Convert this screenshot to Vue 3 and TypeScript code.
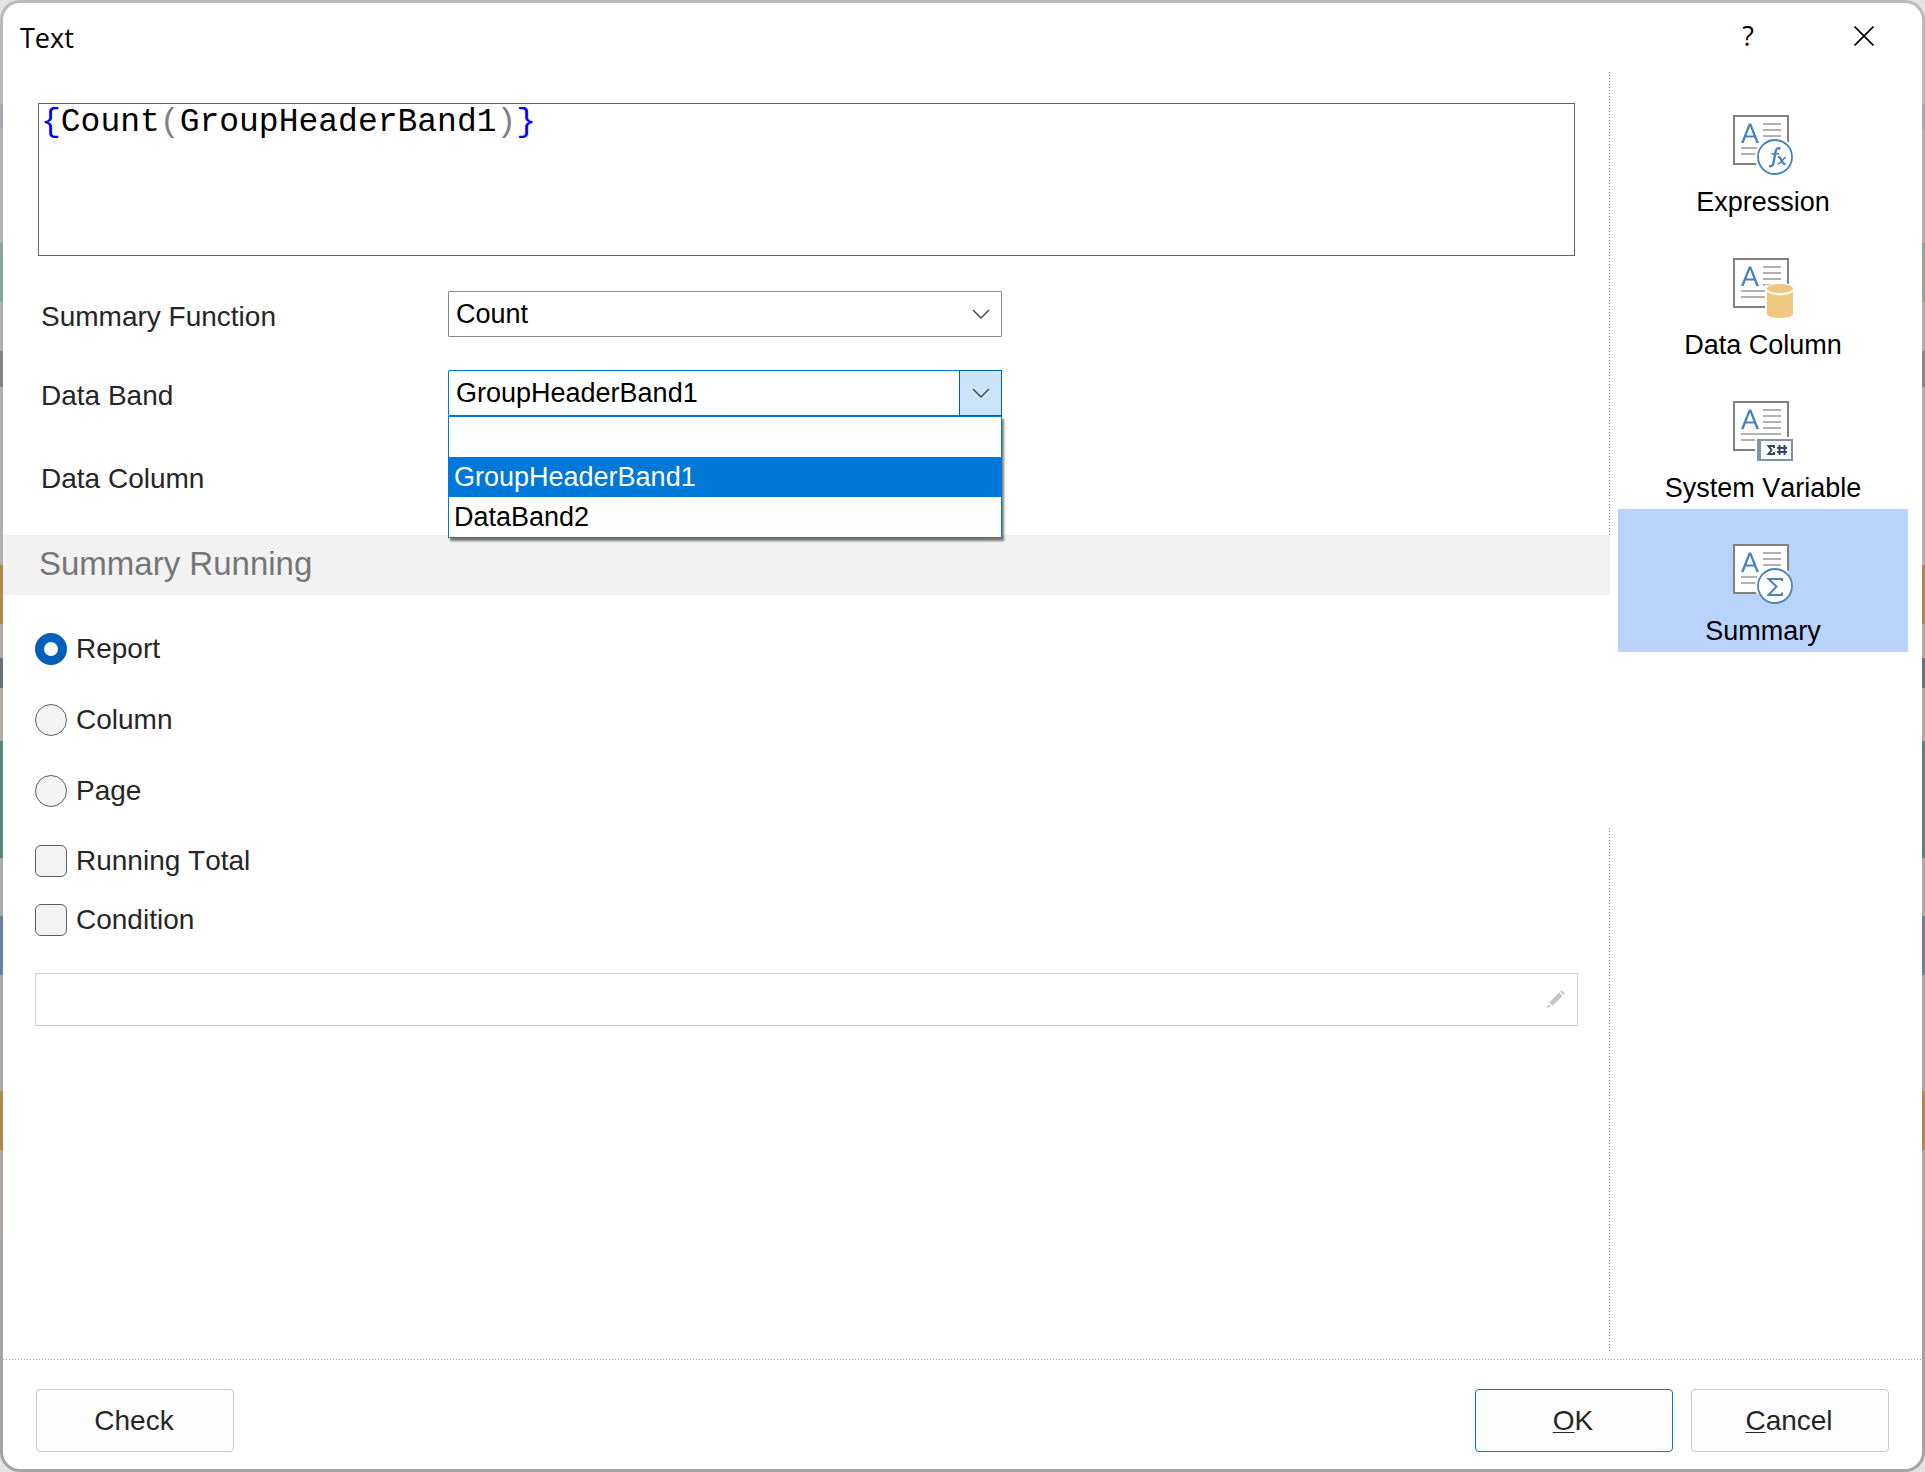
<script setup lang="ts">
import { computed, ref } from 'vue'

type PageId = 'expression' | 'column' | 'variable' | 'summary'

interface Page {
  id: PageId
  label: string
}

const pages: Page[] = [
  { id: 'expression', label: 'Expression' },
  { id: 'column', label: 'Data Column' },
  { id: 'variable', label: 'System Variable' },
  { id: 'summary', label: 'Summary' },
]
const bands: string[] = ['', 'GroupHeaderBand1', 'DataBand2']
const scopes: string[] = ['Report', 'Column', 'Page']

const activePage = ref<PageId>('summary')
const expression = ref('{Count(GroupHeaderBand1)}')
const summaryFunction = ref('Count')
const dataBand = ref('GroupHeaderBand1')
const dataColumn = ref('')
const listOpen = ref(true)
const scope = ref('Report')
const runningTotal = ref(false)
const useCondition = ref(false)
const condition = ref('')

// Splits the expression into braces, parentheses and plain runs for colouring.
const tokens = computed(() =>
  (expression.value.match(/[{}]|[()]|[^{}()]+/g) ?? []).map((text) => ({
    text,
    kind: /[{}]/.test(text) ? 'brace' : /[()]/.test(text) ? 'paren' : 'plain',
  })),
)

function pick(band: string) {
  dataBand.value = band
  listOpen.value = false
}
</script>

<template>
  <div class="backdrop">
    <div class="dialog" role="dialog" aria-labelledby="dialog-title">
      <header class="titlebar">
        <h1 id="dialog-title" class="title">Text</h1>
        <button class="caption-button" type="button" aria-label="Help">?</button>
        <button class="caption-button" type="button" aria-label="Close">
          <svg width="20" height="20" viewBox="0 0 20 20" fill="none" stroke="#000" stroke-width="1.7">
            <path d="M0.5 0.5 19.5 19.5M19.5 0.5 0.5 19.5" />
          </svg>
        </button>
      </header>

      <div class="body">
        <main class="main">
          <div class="editor">
            <pre class="highlight" aria-hidden="true"><span v-for="(t, i) in tokens" :key="i" :class="t.kind">{{ t.text }}</span></pre>
            <textarea v-model="expression" class="code" aria-label="Expression" spellcheck="false"></textarea>
          </div>

          <section class="fields">
            <div class="field">
              <label class="field-label" for="summary-function">Summary Function</label>
              <div class="combo">
                <select id="summary-function" v-model="summaryFunction" class="select">
                  <option>Count</option>
                </select>
                <span class="arrow">
                  <svg width="18" height="10" viewBox="0 0 18 10" fill="none" stroke="#444" stroke-width="1.4"><path d="M1 1 9 9 17 1" /></svg>
                </span>
              </div>
            </div>

            <div class="field">
              <label class="field-label" for="data-band">Data Band</label>
              <div class="combo" :class="{ open: listOpen }">
                <select id="data-band" v-model="dataBand" class="select" @mousedown.prevent="listOpen = !listOpen">
                  <option v-for="band in bands" :key="band">{{ band }}</option>
                </select>
                <span class="arrow">
                  <svg width="18" height="10" viewBox="0 0 18 10" fill="none" stroke="#444" stroke-width="1.4"><path d="M1 1 9 9 17 1" /></svg>
                </span>
                <ul v-if="listOpen" class="list" role="listbox" aria-label="Data Band">
                  <li
                    v-for="band in bands"
                    :key="band"
                    class="item"
                    :class="{ chosen: band === dataBand }"
                    role="option"
                    :aria-selected="band === dataBand"
                    @click="pick(band)"
                  >{{ band }}</li>
                </ul>
              </div>
            </div>

            <div class="field tall">
              <label class="field-label" for="data-column">Data Column</label>
              <div class="combo">
                <select id="data-column" v-model="dataColumn" class="select">
                  <option></option>
                </select>
              </div>
            </div>
          </section>

          <h2 class="band">Summary Running</h2>

          <section class="options">
            <div class="radios" role="radiogroup" aria-label="Summary Running">
              <label v-for="s in scopes" :key="s" class="option">
                <input v-model="scope" class="mark radio" type="radio" name="scope" :value="s" />
                <span>{{ s }}</span>
              </label>
            </div>
            <div class="checks">
              <label class="option">
                <input v-model="runningTotal" class="mark check" type="checkbox" />
                <span>Running Total</span>
              </label>
              <label class="option">
                <input v-model="useCondition" class="mark check" type="checkbox" />
                <span>Condition</span>
              </label>
            </div>
            <div class="condition">
              <input v-model="condition" class="condition-input" type="text" aria-label="Condition expression" :disabled="!useCondition" />
              <button class="edit" type="button" aria-label="Edit condition" :disabled="!useCondition">
                <svg width="20" height="20" viewBox="0 0 20 20" fill="#c4c4c4">
                  <path d="M1 19 2.2 15 5 17.8ZM3.2 13.4 13.2 3.6 16.6 7 6.6 16.8ZM14.2 2.6 15.6 1.2 19 4.4 17.6 6Z" />
                </svg>
              </button>
            </div>
          </section>
        </main>

        <div class="divider" aria-hidden="true">
          <span class="dots upper"></span>
          <span class="dots lower"></span>
        </div>

        <nav class="pages" aria-label="Editor pages">
          <button
            v-for="page in pages"
            :key="page.id"
            class="page"
            :class="{ active: page.id === activePage }"
            type="button"
            @click="activePage = page.id"
          >
            <svg class="page-icon" width="60" height="60" viewBox="0 0 60 60" aria-hidden="true">
              <clipPath :id="'sheet-' + page.id"><rect width="56" height="50" /></clipPath>
              <rect x="1" y="1" width="54" height="48" fill="#fff" stroke="#808080" stroke-width="2" />
              <path d="M30 9h18M30 15h18M30 21h18M30 27h18M8 33h40M8 39h40" stroke="#b2b2b2" stroke-width="2" />
              <path d="M8 28h2.600l2.200-5.600h8.400l2.200 5.600H26L18.200 8.500h-2.400ZM13.600 20.400 17 11.600 20.400 20.400Z" fill="#4a82bd" fill-rule="evenodd" />
              <template v-if="page.id === 'expression' || page.id === 'summary'">
                <circle cx="42" cy="42" r="20" fill="#fff" :clip-path="'url(#sheet-' + page.id + ')'" />
                <circle cx="42" cy="42" r="17" fill="#fff" stroke="#4a82bd" stroke-width="1.8" />
                <path
                  v-if="page.id === 'summary'"
                  d="M49 37V35H35.500L43.500 42.500 35.500 51H49V48.500"
                  fill="none"
                  stroke="#4a82bd"
                  stroke-width="2"
                />
                <g v-else fill="none" stroke="#4a82bd">
                  <path d="M47.500 33.800C45 32.400 43.200 33.400 42.600 36.500L40.400 48C39.800 50.800 38.200 51.800 36 50.800" stroke-width="2.400" />
                  <path d="M38.500 38.800H46" stroke-width="1.600" />
                  <path d="M45 42.500C48.500 40.500 48.500 50.500 52.500 48.500" stroke-width="2.400" />
                  <path d="M53 42.500C50 42 48.500 49.500 44.500 49" stroke-width="1.600" />
                </g>
              </template>
              <template v-else-if="page.id === 'column'">
                <rect x="32" y="27" width="24" height="23" fill="#fff" />
                <path d="M34 30v26c0 5.400 26 5.400 26 0V30Z" fill="#edc87e" />
                <ellipse cx="47" cy="31" rx="14" ry="6.400" fill="#fff" />
                <ellipse cx="47" cy="30.500" rx="13" ry="4.500" fill="#edc87e" />
              </template>
              <template v-else>
                <rect x="22" y="36" width="34" height="14" fill="#fff" />
                <rect x="25" y="39" width="34" height="20" fill="#fff" stroke="#8094b0" stroke-width="2" />
                <rect x="24" y="38" width="4" height="22" fill="#8094b0" />
                <path d="M41 47V45H35.500L38.500 49 35.500 53H41V51M46.500 44V54M51.500 44V54M44 47H54M44 51H54" fill="none" stroke="#34475e" stroke-width="2" />
              </template>
            </svg>
            <span>{{ page.label }}</span>
          </button>
        </nav>
      </div>

      <footer class="footer">
        <button class="button" type="button">Check</button>
        <div class="actions">
          <button class="button default" type="button"><u>O</u>K</button>
          <button class="button" type="button"><u>C</u>ancel</button>
        </div>
      </footer>
    </div>
  </div>
</template>

<style>
body {
  margin: 0;
  background: #e4e4e4;
}
</style>

<style scoped>
.backdrop,
.backdrop * {
  box-sizing: border-box;
}

/* The dimmed report page shows through as a thin rim around the dialog. */
.backdrop {
  display: flex;
  min-height: 100vh;
  padding: 3px;
  border-radius: 20px;
  font-family: "Liberation Sans", Arial, sans-serif;
  font-size: 28px;
  font-kerning: none;
  line-height: 32px;
  color: #262626;
  background: linear-gradient(
    #bababa 0 104px, #a4a8b0 104px 129px, #b2b2b2 129px 243px,
    #8aa898 243px 302px, #b0b0b0 302px 351px, #858585 351px 387px,
    #b0b0b0 387px 565px, #b08850 565px 624px, #b2aaa6 624px 658px,
    #68727a 658px 688px, #b4aaa4 688px 741px, #568880 741px 858px,
    #aaaaaa 858px 916px, #6a80a0 916px 975px, #a8a8a8 975px 1091px,
    #b08850 1091px 1150px, #b0a8a4 1150px 1240px, #a4a4a4 1240px
  );
}

.dialog {
  display: flex;
  flex: 1;
  flex-direction: column;
  min-width: 0;
  border-radius: 17px;
  background: #fff;
}

.titlebar {
  display: flex;
  height: 69px;
}

.title {
  flex: 1;
  margin: 0;
  padding-left: 17px;
  font: 400 27px/69px "Open Sans", "Noto Sans", sans-serif;
  color: #000;
}

.caption-button {
  display: flex;
  align-items: center;
  justify-content: center;
  width: 116px;
  height: 66px;
  padding: 0;
  border: 0;
  background: none;
  font: 400 27px/32px "Open Sans", "Noto Sans", sans-serif;
  color: #000;
}

.body {
  display: flex;
  flex: 1;
}

.main {
  flex: 1;
  min-width: 0;
  padding-top: 31px;
}

.editor {
  position: relative;
  height: 153px;
  margin: 0 34px 0 35px;
  border: 1px solid #646464;
}

.highlight,
.code {
  position: absolute;
  inset: 0;
  width: 100%;
  height: 100%;
  margin: 0;
  padding: 0 0 0 2px;
  border: 0;
  font: 400 33px/38px "Liberation Mono", "Courier New", monospace;
  white-space: pre-wrap;
}

.code {
  background: none;
  color: transparent;
  caret-color: #000;
  resize: none;
  outline: none;
}

.plain {
  color: #000;
}

.brace {
  color: #00f;
}

.paren {
  color: #808080;
}

.fields {
  display: flex;
  flex-direction: column;
  gap: 33px;
  padding: 35px 34px 32px 38px;
}

.field {
  display: flex;
  align-items: center;
  height: 46px;
}

.field.tall {
  height: 54px;
}

.field-label {
  width: 407px;
  padding-top: 6px;
}

.combo {
  position: relative;
  width: 554px;
  height: 46px;
}

.select {
  appearance: none;
  width: 100%;
  height: 100%;
  margin: 0;
  padding: 0 44px 0 7px;
  border: 1px solid #8a8a8a;
  border-radius: 1px;
  background: #fff;
  font: 400 27px/32px "Liberation Sans", Arial, sans-serif;
  font-kerning: none;
  color: #000;
  outline: none;
}

.arrow {
  position: absolute;
  top: 0;
  right: 0;
  display: flex;
  align-items: center;
  justify-content: center;
  width: 43px;
  height: 46px;
  pointer-events: none;
}

.open .select {
  border-color: #0078d7;
}

.open .arrow {
  border: 1px solid #0060b0;
  background: #cce4f7;
}

.list {
  position: absolute;
  top: 100%;
  left: 0;
  z-index: 2;
  width: 100%;
  margin: 0;
  padding: 0;
  border: 1px solid #0078d7;
  background: #fff;
  box-shadow: 2px 3px 2px rgba(0, 0, 0, 0.5);
  list-style: none;
}

.item {
  height: 40px;
  padding-left: 5px;
  font-size: 27px;
  line-height: 41px;
  color: #000;
}

.item.chosen {
  background: #0078d7;
  color: #fff;
}

.band {
  height: 60px;
  margin: 0 -1px 0 0;
  padding-left: 36px;
  background: #f2f2f2;
  font-size: 33px;
  font-weight: 400;
  line-height: 58px;
  color: #767676;
}

.options {
  padding: 38px 31px 32px 32px;
}

.radios {
  display: flex;
  flex-direction: column;
  align-items: flex-start;
  gap: 39px;
}

.checks {
  display: flex;
  flex-direction: column;
  align-items: flex-start;
  gap: 27px;
  margin: 38px 0 37px;
}

.option {
  display: flex;
  align-items: center;
  gap: 9px;
  height: 32px;
}

.mark {
  appearance: none;
  width: 32px;
  height: 32px;
  margin: 0;
  border: 1px solid #5e5e5e;
  background: #f3f3f3;
}

.radio {
  border-radius: 50%;
}

.radio:checked {
  border: 9px solid #005fb8;
  background: #fff;
}

.check {
  border-radius: 6px;
}

.check:checked {
  border: 9px solid #005fb8;
}

.condition {
  display: flex;
  height: 53px;
  border: 1px solid #cfcfcf;
}

.condition-input {
  flex: 1;
  min-width: 0;
  padding: 0 8px;
  border: 0;
  background: none;
  font: inherit;
  outline: none;
}

.edit {
  display: flex;
  align-items: center;
  justify-content: center;
  width: 42px;
  padding: 0 0 2px;
  border: 0;
  background: none;
}

.divider {
  display: flex;
  flex-direction: column;
  gap: 293px;
  width: 1px;
  padding-bottom: 7px;
}

.dots {
  width: 1px;
  background: repeating-linear-gradient(#808080 0 1px, transparent 1px 3px);
}

.upper {
  height: 463px;
}

.lower {
  flex: 1;
}

.pages {
  display: flex;
  flex-direction: column;
  width: 312px;
  padding: 8px 14px 0 8px;
}

.page {
  display: flex;
  flex-direction: column;
  align-items: center;
  gap: 11px;
  height: 143px;
  padding: 35px 0 0;
  border: 0;
  background: none;
  font: 400 27px/32px "Liberation Sans", Arial, sans-serif;
  font-kerning: none;
  color: #000;
}

.page.active {
  background: #bad3fd;
}

.page-icon {
  display: block;
}

.footer {
  display: flex;
  justify-content: space-between;
  height: 110px;
  padding: 30px 33px 0;
  background: repeating-linear-gradient(90deg, #a0a0a0 0 1px, transparent 1px 3px) top / 100% 1px no-repeat;
}

.actions {
  display: flex;
  gap: 18px;
}

.button {
  width: 198px;
  height: 63px;
  padding: 0 2px 0 0;
  border: 1px solid #cacaca;
  border-radius: 4px;
  background: #fdfdfd;
  font: inherit;
  font-kerning: none;
  color: #262626;
}

.button.default {
  border-color: #0078d4;
}

.button u {
  text-decoration-thickness: 1px;
  text-underline-offset: 2px;
}
</style>
